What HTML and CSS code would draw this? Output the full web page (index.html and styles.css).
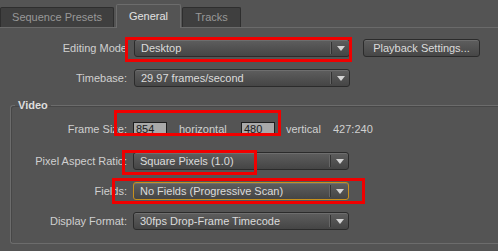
FILE: index.html
```html
<!DOCTYPE html>
<html>
<head>
<meta charset="utf-8">
<link rel="stylesheet" href="styles.css">
</head>
<body>
<div class="tabs">
  <div class="tab tab-seq">Sequence Presets</div>
  <div class="tab tab-active">General</div>
  <div class="tab tab-tracks">Tracks</div>
</div>
<div class="panel">
  <div class="row row-first">
    <div class="label">Editing Mode</div>
    <div class="select"><span class="val">Desktop</span><span class="arrow"></span></div>
    <div class="button">Playback Settings...</div>
  </div>
  <div class="row">
    <div class="label">Timebase:</div>
    <div class="select"><span class="val">29.97 frames/second</span><span class="arrow"></span></div>
  </div>
  <fieldset class="group">
    <legend class="legend">Video</legend>
    <div class="row row-frame">
      <div class="label label-in">Frame Size:</div>
      <div class="input">854</div>
      <div class="text t-h">horizontal</div>
      <div class="input">480</div>
      <div class="text t-v">vertical</div>
      <div class="text t-r">427:240</div>
    </div>
    <div class="row">
      <div class="label label-in">Pixel Aspect Ratio:</div>
      <div class="select"><span class="val">Square Pixels (1.0)</span><span class="arrow"></span></div>
    </div>
    <div class="row">
      <div class="label label-in">Fields:</div>
      <div class="select select-focus"><span class="val">No Fields (Progressive Scan)</span><span class="arrow"></span></div>
    </div>
    <div class="row">
      <div class="label label-in">Display Format:</div>
      <div class="select"><span class="val">30fps Drop-Frame Timecode</span><span class="arrow"></span></div>
    </div>
  </fieldset>
</div>
<div class="mark mark1"></div>
<div class="mark mark2"></div>
<div class="mark mark3"></div>
<div class="mark mark4"></div>
</body>
</html>
```
FILE: styles.css
```css
html, body {
  margin: 0;
  padding: 0;
}
body {
  width: 498px;
  height: 251px;
  overflow: hidden;
  background: #545454;
  font-family: "Liberation Sans", Arial, sans-serif;
  font-size: 11px;
  color: #cfcfcf;
  position: relative;
}
.tabs {
  display: flex;
  align-items: flex-end;
  box-sizing: border-box;
  height: 28px;
  border-bottom: 1px solid #6a6a6a;
}
.tab {
  box-sizing: border-box;
  height: 20px;
  line-height: 18px;
  background: #3f3f3f;
  border: 1px solid #2e2e2e;
  border-bottom: none;
  color: #989898;
  text-align: center;
  border-radius: 2px 2px 0 0;
}
.tab-seq {
  width: 114px;
  margin-right: 2px;
}
.tab-active {
  width: 65px;
  height: 24px;
  line-height: 22px;
  margin-bottom: -1px;
  background: #545454;
  border-color: #6c6c6c;
  color: #e2e2e2;
  margin-right: 1px;
}
.tab-tracks {
  width: 59px;
}
.panel {
  padding-top: 11px;
}
.row {
  display: flex;
  align-items: center;
  height: 18px;
  margin-bottom: 12px;
}
.row-frame {
  margin-bottom: 14px;
}
.label {
  width: 127px;
  text-align: right;
  margin-right: 7px;
  white-space: nowrap;
  color: #d0d0d0;
}
.label-in {
  width: 116px;
  margin-right: 6px;
}
.select {
  box-sizing: border-box;
  width: 216px;
  height: 18px;
  display: flex;
  align-items: center;
  border: 1px solid #2b2b2b;
  border-radius: 3px;
  background: linear-gradient(#5e5e5e, #454545);
  box-shadow: inset 0 1px 0 #6e6e6e;
  color: #dcdcdc;
}
.select-focus {
  border-color: #c8901c;
}
.val {
  flex: 1;
  padding-left: 6px;
  white-space: nowrap;
}
.arrow {
  width: 17px;
  height: 12px;
  border-left: 1px solid #333;
  box-shadow: -1px 0 0 #666;
  position: relative;
}
.arrow::after {
  content: "";
  position: absolute;
  left: 5px;
  top: 4px;
  border-left: 4px solid transparent;
  border-right: 4px solid transparent;
  border-top: 5px solid #d4d4d4;
}
.button {
  box-sizing: border-box;
  margin-left: 13px;
  width: 117px;
  height: 18px;
  line-height: 16px;
  text-align: center;
  border: 1px solid #2b2b2b;
  border-radius: 3px;
  background: linear-gradient(#5e5e5e, #464646);
  box-shadow: inset 0 1px 0 #6e6e6e;
  color: #dcdcdc;
}
.group {
  margin: 6px 0 0 10px;
  padding: 9px 0 1px 0;
  border: 1px solid #6c6c6c;
  border-right: none;
  border-radius: 3px 0 0 3px;
  box-shadow: inset 1px 1px 0 #474747;
}
.legend {
  font-weight: bold;
  color: #dedede;
  padding: 0 3px;
  margin-left: 4px;
  font-size: 11px;
}
.input {
  box-sizing: border-box;
  width: 34px;
  height: 14px;
  line-height: 12px;
  background: #a9a9a9;
  border: 1px solid #1e1e1e;
  color: #1a1a1a;
  padding-left: 2px;
}
.text {
  color: #d0d0d0;
  white-space: nowrap;
}
.t-h {
  margin-left: 12px;
  width: 62px;
}
.t-v {
  margin-left: 11px;
  width: 47px;
}
.mark {
  position: absolute;
  box-sizing: border-box;
  border: 3px solid #f00000;
}
.mark1 { left: 125px; top: 37px; width: 227px; height: 25px; }
.mark2 { left: 114px; top: 110px; width: 167px; height: 26px; }
.mark3 { left: 122px; top: 150px; width: 135px; height: 25px; }
.mark4 { left: 112px; top: 178px; width: 253px; height: 26px; }
```
